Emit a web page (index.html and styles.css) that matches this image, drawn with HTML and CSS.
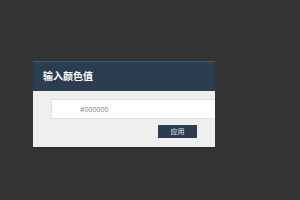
FILE: index.html
```html
<!DOCTYPE html>
<html>
    <head>
        <meta charset="utf-8">
        <title>输入颜色值</title>
        <link rel="stylesheet" href="styles.css">
    </head>
    <body>
        <div id="dialog">
            <div class="dialog-header">输入颜色值</div>
            <div class="dialog-body">
                <input class="color-input" type="text" placeholder="#000000">
                <div class="actions">
                    <button class="apply-btn">应用</button>
                </div>
            </div>
        </div>
    </body>
</html>
```

FILE: styles.css
```css
html, body{
    margin: 0;
    height: 100%;
}

body{
    background-color: #333333;
    font-family: "Noto Sans", "Noto Sans CJK SC", sans-serif;
    padding: 61px 0 0 33px;
    box-sizing: border-box;
}

#dialog{
    width: 182px;
}

.dialog-header{
    height: 29px;
    background-color: #2c3d52;
    border-top: 1px solid #4c5868;
    color: #ffffff;
    font-size: 10px;
    font-weight: bold;
    line-height: 29px;
    padding-left: 10px;
}

.dialog-body{
    background-color: #efefef;
    padding: 8px 0 9px 18px;
    border-bottom: 1px solid #2a2a2a;
}

.color-input{
    display: block;
    width: 164px;
    height: 20px;
    box-sizing: border-box;
    margin: 0;
    border: 1px solid #e0e0e0;
    border-right: none;
    background-color: #ffffff;
    padding: 0 0 0 28px;
    font-family: "Noto Sans", sans-serif;
    font-size: 7px;
    outline: none;
}

.color-input::placeholder{
    color: #888888;
}

.actions{
    display: flex;
    justify-content: flex-end;
    padding-right: 18px;
    margin-top: 6px;
}

.apply-btn{
    width: 39px;
    height: 13px;
    padding: 0;
    border: none;
    background-color: #2c3d52;
    color: #e8e8e8;
    font-family: "Noto Sans CJK SC", sans-serif;
    font-size: 7px;
    line-height: 13px;
}
```
